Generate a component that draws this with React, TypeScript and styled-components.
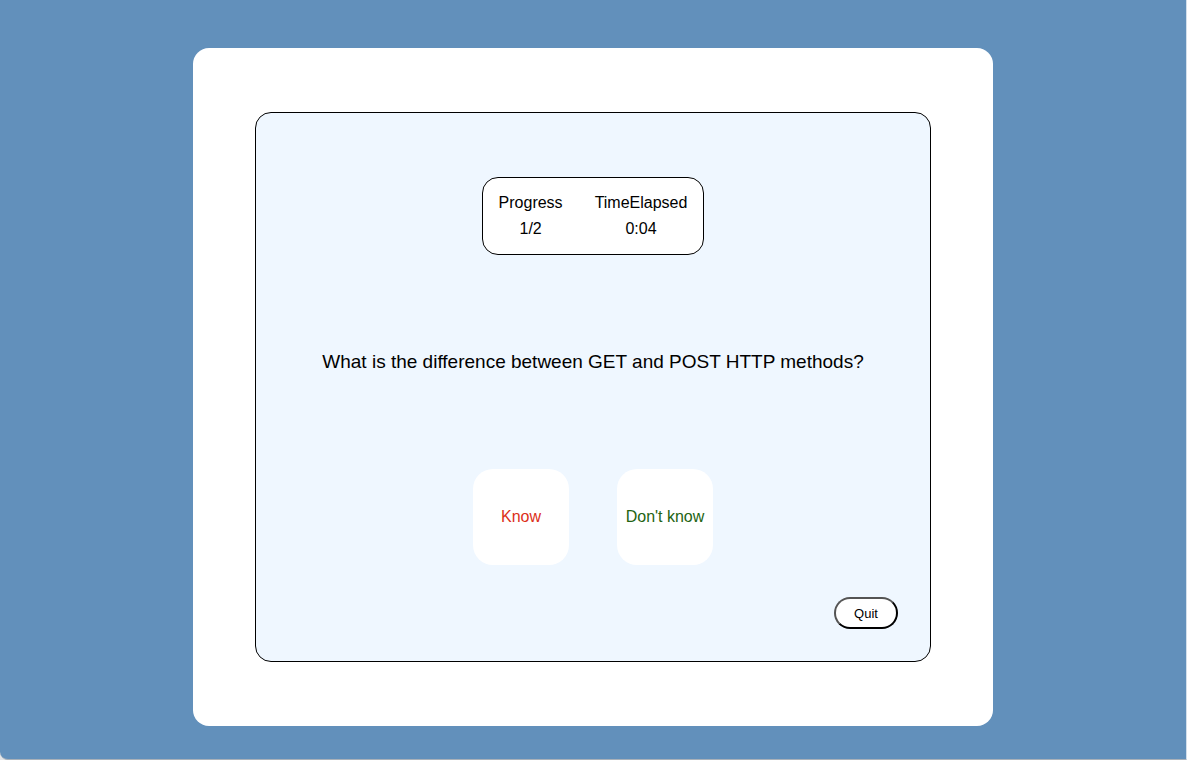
import React from 'react';
import styled, { createGlobalStyle } from 'styled-components';

const GlobalStyle = createGlobalStyle`
  *, *::before, *::after { box-sizing: border-box; }
  body {
    margin: 0;
    background: #e4e6e8;
    color: #000;
    font-family: Helvetica, "Liberation Sans", Arial, sans-serif;
    font-size: 16px;
    line-height: 18px;
  }
`;

const Page = styled.main`
  display: flex;
  flex-direction: column;
  align-items: center;
  min-height: 100vh;
  padding: 48px 24px 32px;
  background: #6290bb;
  border-right: 1px solid #d3dfeb;
  border-bottom: 1px solid #a9b1b9;
  border-bottom-left-radius: 8px;
`;

const Panel = styled.section`
  display: flex;
  justify-content: center;
  width: 100%;
  max-width: 800px;
  padding: 64px 24px;
  background: #fff;
  border-radius: 16px;
`;

const Card = styled.article`
  display: flex;
  flex-direction: column;
  align-items: center;
  width: 100%;
  max-width: 676px;
  padding: 64px 32px 32px;
  background: #eff7ff;
  border: 1px solid #000;
  border-radius: 16px;
`;

const Stats = styled.dl`
  display: flex;
  gap: 32px;
  margin: 0;
  padding: 16px;
  background: #fff;
  border: 1px solid #000;
  border-radius: 16px;
`;

const Stat = styled.div`
  display: flex;
  flex-direction: column;
  gap: 8px;
  text-align: center;
`;

const StatLabel = styled.dt`
  margin: 0;
`;

const StatValue = styled.dd`
  margin: 0;
`;

const Question = styled.p`
  margin: 96px 0;
  font-size: 19px;
  line-height: 22px;
  text-align: center;
`;

const Answers = styled.div`
  display: flex;
  gap: 48px;
`;

const AnswerButton = styled.button<{ $color: string }>`
  width: 96px;
  height: 96px;
  padding: 0;
  background: #fff;
  border: none;
  border-radius: 20px;
  color: ${({ $color }) => $color};
  font: inherit;
  white-space: nowrap;
  cursor: pointer;
`;

const QuitButton = styled.button`
  align-self: flex-end;
  width: 64px;
  height: 32px;
  margin-top: 32px;
  padding: 0;
  background: #fff;
  border: 2px outset #000;
  border-radius: 16px;
  color: #000;
  font-family: inherit;
  font-size: 13px;
  cursor: pointer;
`;

export default function App() {
  return (
    <>
      <GlobalStyle />
      <Page>
        <Panel>
          <Card>
            <Stats>
              <Stat>
                <StatLabel>Progress</StatLabel>
                <StatValue>1/2</StatValue>
              </Stat>
              <Stat>
                <StatLabel>TimeElapsed</StatLabel>
                <StatValue>0:04</StatValue>
              </Stat>
            </Stats>
            <Question>What is the difference between GET and POST HTTP methods?</Question>
            <Answers>
              <AnswerButton type="button" $color="#dc301a">Know</AnswerButton>
              <AnswerButton type="button" $color="#236412">Don't know</AnswerButton>
            </Answers>
            <QuitButton type="button">Quit</QuitButton>
          </Card>
        </Panel>
      </Page>
    </>
  );
}
